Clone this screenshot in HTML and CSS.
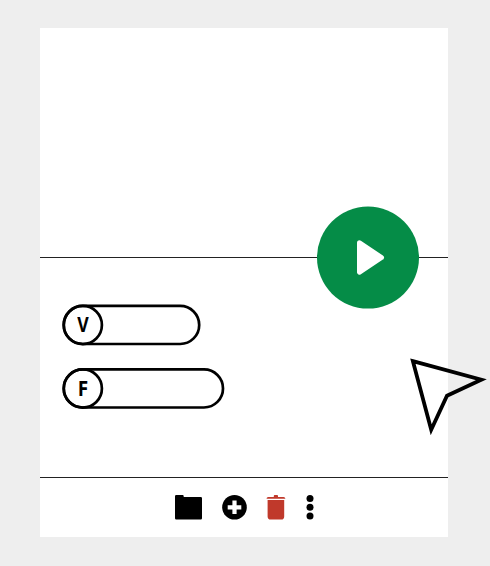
FILE: index.html
```html
<!DOCTYPE html>
<html lang="en">
<head>
<meta charset="utf-8">
<title>Player</title>
<link rel="stylesheet" href="styles.css">
</head>
<body>
<main class="card">
  <section class="stage"></section>
  <section class="options">
    <div class="pill pill-short">
      <svg class="outline" viewBox="0 0 139 42"><rect x="1.8" y="1.9" width="135.4" height="38.1" rx="19.05"/><circle cx="20.8" cy="20.95" r="19.1"/></svg>
      <span class="letter letter-v">V</span>
    </div>
    <div class="pill pill-long">
      <svg class="outline" viewBox="0 0 163 42"><rect x="1.8" y="1.4" width="159.2" height="38.1" rx="19.05"/><circle cx="20.8" cy="20.45" r="19.1"/></svg>
      <span class="letter">F</span>
    </div>
  </section>
  <footer class="toolbar">
    <svg class="folder" viewBox="0 0 27 25"><path d="M0 1.3Q0 .1 1.2.1H7.6Q8.7.1 8.7 1.2V2.1H25.8Q27 2.1 27 3.3V23.2Q27 24.4 25.8 24.4H1.2Q0 24.4 0 23.2Z"/></svg>
    <svg class="add" viewBox="0 0 25 25"><circle cx="12.5" cy="12.3" r="12.3"/><path d="M10.4 5.5h4.2v4.7h4.7v4.2h-4.7v4.7h-4.2v-4.7H5.7v-4.2h4.7z" fill="#fff"/></svg>
    <svg class="trash" viewBox="0 0 20 25"><path d="M.5 3.8Q.6 1.9 2.3 1.9H7.8V1Q7.8.1 8.6.1H11.2Q12 .1 12 1V1.9H17.5Q19.3 1.9 19.4 3.8ZM1.6 5.1H18.2V21.4Q18.2 24.5 15.2 24.5H4.6Q1.6 24.5 1.6 21.4Z"/></svg>
    <svg class="more" viewBox="0 0 8 25"><circle cx="4" cy="3.5" r="3.5"/><circle cx="4" cy="12.3" r="3.5"/><circle cx="4" cy="21.1" r="3.5"/></svg>
  </footer>
  <button class="play" aria-label="Play">
    <svg viewBox="0 0 102 102"><circle cx="51" cy="50.6" r="51" fill="#058c47"/><path d="M42.5 35.8L64.5 50.5L42.5 65.2Z" fill="#fff" stroke="#fff" stroke-width="5" stroke-linejoin="round"/></svg>
  </button>
</main>
<svg class="cursor" viewBox="405 350 85 95"><path d="M412.9 361.2L481.3 379.7L447 395.7L431.2 429.8Z" fill="none" stroke="#000" stroke-width="3.8" stroke-miterlimit="10"/></svg>
</body>
</html>
```
FILE: styles.css
```css
* { box-sizing: border-box; }
body {
  margin: 0;
  height: 566px;
  padding: 28px 0 0 40px;
  background: #eee;
  overflow: hidden;
}
.card {
  position: relative;
  display: flex;
  flex-direction: column;
  width: 408.4px;
  height: 509px;
  background: #fff;
}
.stage { height: 230px; border-bottom: 1px solid #222; }
.options {
  display: flex;
  flex-direction: column;
  gap: 22px;
  height: 220px;
  padding: 46px 0 0 22px;
  border-bottom: 1px solid #222;
}
.pill {
  display: grid;
  height: 42px;
}
.pill > * { grid-area: 1 / 1; }
.pill-short { width: 139px; }
.pill-long { width: 163px; }
.outline {
  width: 100%;
  height: 42px;
  fill: none;
  stroke: #000;
  stroke-width: 2.7px;
}
.letter {
  width: 42px;
  text-align: center;
  font: 700 21px/41px "Noto Sans", sans-serif;
  transform: scaleX(.9);
}
.letter-v { transform: scaleX(.84); }
.toolbar {
  display: flex;
  align-items: flex-start;
  padding: 17px 0 0 135px;
}
.toolbar svg { height: 25px; flex: none; overflow: visible; }
.folder { width: 27px; }
.add { width: 25px; margin-left: 20px; }
.trash { width: 20px; margin-left: 19px; fill: #c0392b; }
.more { width: 8px; margin-left: 20px; }
.play {
  position: absolute;
  left: 277px;
  top: 179px;
  width: 102px;
  height: 102px;
  padding: 0;
  border: 0;
  background: none;
}
.play svg { display: block; width: 102px; height: 102px; overflow: visible; }
.cursor {
  position: absolute;
  left: 405px;
  top: 350px;
  width: 85px;
  height: 95px;
}
```
